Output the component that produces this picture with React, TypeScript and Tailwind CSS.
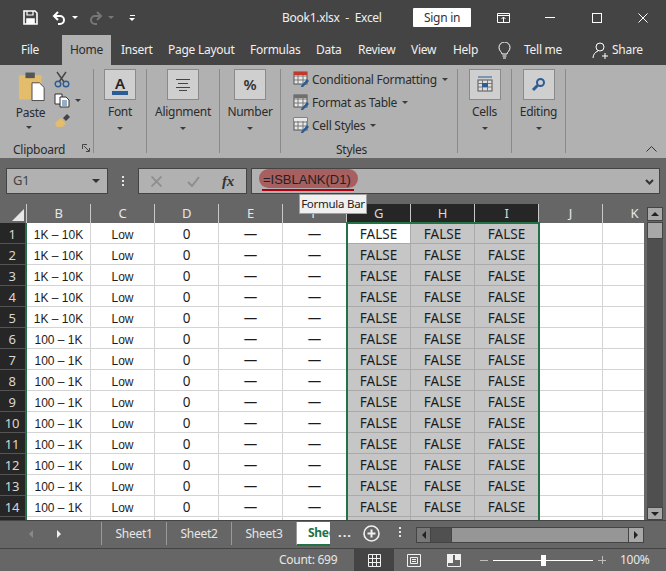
import { ReactNode } from "react";

const ROWS = Array.from({ length: 15 }, (_, i) => i + 1);
const COLS = ["B", "C", "D", "E", "F", "G", "H", "I", "J", "K"];

function Caret({ className = "" }: { className?: string }) {
  return <span className={`inline-block h-0 w-0 border-x-[3px] border-t-[3px] border-x-transparent border-t-[#3c3c3c] ${className}`} />;
}

function SaveIcon() {
  return (
    <svg width="15" height="15" viewBox="0 0 15 15" fill="none" stroke="#fff" strokeWidth="1.6">
      <path d="M1 1h11l2 2v11H1z" />
      <path d="M4 1v4h6V1" strokeWidth="1.2" />
      <path d="M4 14V9h7v5" fill="#fff" />
    </svg>
  );
}

function UndoIcon({ color, flip }: { color: string; flip?: boolean }) {
  return (
    <svg width="15" height="14" viewBox="0 0 15 14" fill="none" stroke={color} strokeWidth="2" className={flip ? "-scale-x-100" : ""}>
      <path d="M6 1L2 5l4 4" />
      <path d="M2 5h6a4 4 0 0 1 4 4 4 4 0 0 1-4 4H6" />
    </svg>
  );
}

function LargeButton({ label, children, width }: { label: string; children: ReactNode; width: string }) {
  return (
    <div className={`flex ${width} mt-1 h-[84px] shrink-0 flex-col items-center border-r border-[#8a8a8a]`}>
      <div className="flex h-[31px] w-[32px] items-center justify-center border border-[#8a8a8a] bg-[#cfcfcf]">{children}</div>
      <div className="mt-[3px] text-[12px] leading-[18px] text-[#2b2b2b]">{label}</div>
      <Caret className="mt-[6px]" />
    </div>
  );
}

function StyleRow({ icon, label }: { icon: ReactNode; label: string }) {
  return (
    <div className="flex h-[23px] shrink-0 items-center gap-[2px] text-[12px] text-[#2b2b2b]">
      {icon}
      <span>{label}</span>
      <Caret className="ml-[3px]" />
    </div>
  );
}

function GridIcon({ top }: { top: string }) {
  return (
    <svg width="17" height="17" viewBox="0 0 17 17" fill="none">
      <rect x="1" y="1" width="13" height="12" fill="#e8e8e8" stroke="#555" />
      <path d="M1 5h13M1 9h13M5 1v12M10 1v12" stroke="#777" />
      <rect x="1" y="1" width="13" height="3" fill={top} />
      <path d="M8 15l6-7 2 2-6 6H8z" fill="#2b5c94" />
    </svg>
  );
}

function Ribbon() {
  return (
    <div className="flex h-[93px] bg-[#b1b1b1]">
      <div className="relative mt-1 flex h-[84px] w-[94px] shrink-0 border-r border-[#8a8a8a]">
        <div className="flex w-[50px] flex-col items-center">
          <svg width="28" height="30" viewBox="0 0 30 31" className="ml-[14px] mt-[3px]">
            <rect x="1" y="3" width="24" height="26" rx="1" fill="#e3bd6c" />
            <rect x="8" y="0" width="10" height="6" fill="#555" />
            <path d="M15 11h8l5 5v14H15z" fill="#fff" stroke="#444" />
          </svg>
          <span className="ml-[11px] mt-[2px] text-[12px] leading-[18px] text-[#2b2b2b]">Paste</span>
          <Caret className="ml-[8px] mt-[4px]" />
        </div>
        <div className="ml-[4px] flex flex-col gap-[5px] pt-[2px]">
          <svg width="16" height="17" viewBox="0 0 16 17" fill="none" stroke="#2b5c94" strokeWidth="1.4">
            <path d="M3 1l7 10M12 1L5 11" stroke="#444" />
            <circle cx="4" cy="13" r="2.8" />
            <circle cx="12" cy="13" r="2.8" />
          </svg>
          <div className="flex items-center gap-[5px]">
            <svg width="16" height="15" viewBox="0 0 16 15" fill="#fff" stroke="#333">
              <path d="M1 1h7v10H1z" />
              <path d="M6 4h6l3 3v7H6z" />
              <path d="M8 8h5M8 10h5M8 12h5" stroke="#2b5c94" />
            </svg>
            <Caret />
          </div>
          <svg width="17" height="15" viewBox="0 0 17 15">
            <path d="M1 10l6-5 5 6-4 3H3z" fill="#e3bd6c" />
            <path d="M9 5l4-4 3 3-4 4z" fill="#444" />
          </svg>
        </div>
        <div className="absolute bottom-[-6px] left-[13px] text-[12px] leading-[18px] text-[#2b2b2b]">Clipboard</div>
        <svg width="9" height="9" viewBox="0 0 9 9" fill="none" stroke="#444" className="absolute bottom-[0px] right-[2px]">
          <path d="M.5 5V.5H5M2 2l5 5M4 7.500h3.500V4" />
        </svg>
      </div>
      <LargeButton label="Font" width="w-[53px]">
        <div className="flex flex-col items-center">
          <span className="text-[15px] font-semibold leading-[16px] text-[#222]">A</span>
          <span className="h-[4px] w-[16px] bg-[#2b5c94]" />
        </div>
      </LargeButton>
      <LargeButton label="Alignment" width="w-[73px]">
        <svg width="16" height="12" viewBox="0 0 16 12" stroke="#444">
          <path d="M1 .5h14M3 4.500h10M1 8.500h14M4 11.500h8" />
        </svg>
      </LargeButton>
      <LargeButton label="Number" width="w-[61px]">
        <span className="text-[15px] font-semibold text-[#333]">%</span>
      </LargeButton>
      <div className="mt-1 flex h-[84px] w-[177px] shrink-0 flex-col border-r border-[#8a8a8a] pl-[12px]">
        <div className="-mt-[1px]">
          <StyleRow icon={<GridIcon top="#c0392b" />} label="Conditional Formatting" />
          <StyleRow icon={<GridIcon top="#6f6f6f" />} label="Format as Table" />
          <StyleRow icon={<GridIcon top="#e8e8e8" />} label="Cell Styles" />
        </div>
        <div className="mt-[5px] pl-[43px] text-[12px] leading-[16px] text-[#2b2b2b]">Styles</div>
      </div>
      <LargeButton label="Cells" width="w-[54px]">
        <svg width="16" height="17" viewBox="0 0 16 17">
          <path d="M1 1h14" stroke="#2b5c94" />
          <rect x="1" y="4" width="14" height="11" fill="#ddd" stroke="#555" />
          <path d="M1 7.500h14M1 11h14M5.500 4v11M10.500 4v11" stroke="#777" />
          <rect x="5" y="7" width="6" height="4" fill="#2b5c94" />
        </svg>
      </LargeButton>
      <LargeButton label="Editing" width="w-[54px]">
        <svg width="15" height="15" viewBox="0 0 15 15" fill="none" stroke="#2b5c94" strokeWidth="2">
          <circle cx="9.500" cy="5.500" r="3.500" />
          <path d="M6.500 8.500L2 13" strokeWidth="3" />
        </svg>
      </LargeButton>
      <div className="relative flex-1">
        <svg width="11" height="6" viewBox="0 0 11 6" fill="none" stroke="#333" className="absolute bottom-[6px] right-[9px]">
          <path d="M.5 5.500l5-5 5 5" />
        </svg>
      </div>
    </div>
  );
}

function ColHeader({ col }: { col: string }) {
  const active = col === "G" || col === "H" || col === "I";
  return (
    <div className={`flex h-[19px] items-center justify-center border-r border-[#c8c8c8] text-[13px] ${active ? "bg-[#262626] text-[#d8d8d8]" : "text-[#e6e6e6]"}`}>
      {col}
    </div>
  );
}

function Cell({ col, row }: { col: string; row: number }) {
  // row 15 only shows as a sliver above the sheet tabs, so it carries no text
  let text = "";
  const selected = col === "G" || col === "H" || col === "I";
  if (row < 15) {
    if (col === "B") text = row <= 5 ? "1K – 10K" : "100 – 1K";
    if (col === "C") text = "Low";
    if (col === "D") text = "0";
    if (col === "E" || col === "F") text = "—";
    if (selected) text = "FALSE";
  }
  const white = col === "G" && row === 1;
  const liberation = col === "B" || col === "C";
  return (
    <div
      className={`flex h-[21px] items-center justify-center border-b border-r pt-[3px] tracking-normal ${
        white ? "border-[#aaaaaa] bg-white" : selected ? "border-[#aaaaaa] bg-[#c6c6c6]" : "border-[#d4d4d4] bg-white"
      } ${liberation ? "font-['Liberation_Sans'] text-[12px]" : "text-[13.5px]"} text-[#1c1c1c]`}
    >
      {text}
    </div>
  );
}

function Sheet() {
  return (
    <div className="flex h-[316px] overflow-hidden">
      <div className="relative grid h-[316px] w-[644px] grid-cols-[27px_repeat(10,64px)] content-start overflow-hidden">
        <div className="flex h-[19px] items-end justify-end border-r border-[#c8c8c8] pb-[2px] pr-[2px]">
          <span className="h-0 w-0 border-b-[12px] border-l-[12px] border-b-[#e8e8e8] border-l-transparent" />
        </div>
        {COLS.map((c) => <ColHeader key={c} col={c} />)}
        {ROWS.map((r) => [
          <div key={`h${r}`} className="flex h-[21px] items-center justify-center border-b border-r-2 border-b-[#555] border-r-[#217346] bg-[#262626] pr-[1px] pt-[3px] text-[13px] text-[#d8d8d8]">
            {r < 15 ? r : ""}
          </div>,
          ...COLS.map((c) => <Cell key={c + r} col={c} row={r} />),
        ])}
        <div className="pointer-events-none absolute left-[346px] top-[18px] h-[300px] w-[194px] border-2 border-[#217346]" />
      </div>
      <div className="flex w-[22px] flex-col items-center pt-[3px]">
        <div className="flex h-[14px] w-[16px] items-center justify-center border border-[#444] bg-[#a8a8a8]">
          <span className="h-0 w-0 border-x-[4px] border-b-[4px] border-x-transparent border-b-[#222]" />
        </div>
        <div className="mt-[1px] h-[17px] w-[16px] border border-[#444] bg-[#a8a8a8]" />
        <div className="w-[16px] flex-1 bg-[#4f4f4f]" />
        <div className="flex h-[13px] w-[16px] items-center justify-center border border-[#444] bg-[#a8a8a8]">
          <span className="h-0 w-0 border-x-[4px] border-t-[4px] border-x-transparent border-t-[#222]" />
        </div>
      </div>
    </div>
  );
}

function SheetTab({ label }: { label: string }) {
  return <div className="flex h-[23px] w-[65px] items-center justify-center border-r border-[#9a9a9a] text-[12px] text-[#e6e6e6]">{label}</div>;
}

export default function App() {
  return (
    <div className="flex h-[571px] w-[666px] flex-col overflow-hidden bg-[#666666] font-['Noto_Sans',sans-serif] tracking-[-0.27px]">
      {/* title bar */}
      <div className="flex h-[35px] items-center bg-[#444444] text-[12px] text-[#f0f0f0]">
        <div className="ml-[23px]"><SaveIcon /></div>
        <div className="ml-[14px]"><UndoIcon color="#fff" /></div>
        <span className="ml-[5px] h-0 w-0 border-x-[3px] border-t-[3px] border-x-transparent border-t-[#fff]" />
        <div className="ml-[10px]"><UndoIcon color="#777" flip /></div>
        <span className="ml-[5px] h-0 w-0 border-x-[3px] border-t-[3px] border-x-transparent border-t-[#777]" />
        <div className="ml-[15px] flex flex-col items-center gap-[2px]">
          <span className="h-px w-[5px] bg-white" />
          <span className="h-0 w-0 border-x-[3px] border-t-[3px] border-x-transparent border-t-white" />
        </div>
        <span className="ml-[147px] w-[106px] whitespace-pre">Book1.xlsx  -  Excel</span>
        <div className="ml-[25px] flex h-[19px] w-[58px] items-center justify-center rounded-[1px] bg-white text-[#333]">Sign in</div>
        <svg width="13" height="10" viewBox="0 0 13 10" fill="none" stroke="#fff" className="ml-[26px]">
          <path d="M.5.500h12v9H.5zM.5 2.500h12M6.500 9V4M4.500 6l2-2 2 2" />
        </svg>
        <span className="ml-[35px] h-px w-[10px] bg-white" />
        <span className="ml-[37px] h-[10px] w-[10px] border border-white" />
        <svg width="10" height="10" viewBox="0 0 10 10" stroke="#fff" className="ml-[36px]">
          <path d="M.5.500l9 9M9.500.500l-9 9" />
        </svg>
      </div>

      {/* ribbon tabs */}
      <div className="flex h-[30px] items-center whitespace-nowrap bg-[#444444] text-[12px] text-[#f0f0f0]">
        <span className="ml-[21px] w-[18px]">File</span>
        <div className="ml-[23px] flex h-[30px] w-[49px] items-center justify-center bg-[#b1b1b1] text-[#2b2b2b]">Home</div>
        <span className="ml-[10px] w-[29px]">Insert</span>
        <span className="ml-[18px] w-[65px]">Page Layout</span>
        <span className="ml-[17px] w-[49px]">Formulas</span>
        <span className="ml-[17px] w-[25px]">Data</span>
        <span className="ml-[17px] w-[36px]">Review</span>
        <span className="ml-[17px] w-[25px]">View</span>
        <span className="ml-[17px] w-[25px]">Help</span>
        <svg width="13" height="17" viewBox="0 0 13 17" fill="none" stroke="#fff" className="ml-[20px]">
          <path d="M4 12c0-2-3-3-3-6.500a5.500 5.500 0 0 1 11 0C12 9 9 10 9 12zM4.500 14h4M5 16h3" />
        </svg>
        <span className="ml-[13px] w-[38px]">Tell me</span>
        <svg width="17" height="17" viewBox="0 0 17 17" fill="none" stroke="#fff" className="ml-[30px]">
          <circle cx="8" cy="5" r="4" />
          <path d="M1 16c0-3 2-6 5-7M10 14h6M13 11v6" />
        </svg>
        <span className="ml-[3px]">Share</span>
      </div>

      <Ribbon />

      {/* formula bar */}
      <div className="relative mt-[10px] flex h-[26px] items-stretch text-[12px] text-[#333]">
        <div className="ml-[6px] flex w-[102px] items-center justify-between border border-[#444] bg-[#b1b1b1] px-[6px] text-[13px] text-[#444]">
          G1
          <span className="mr-[1px] h-0 w-0 border-x-[4px] border-t-[4px] border-x-transparent border-t-[#333]" />
        </div>
        <div className="flex w-[30px] flex-col items-center justify-center gap-[2px]">
          <span className="h-[2px] w-[2px] bg-[#e6e6e6]" />
          <span className="h-[2px] w-[2px] bg-[#e6e6e6]" />
          <span className="h-[2px] w-[2px] bg-[#e6e6e6]" />
        </div>
        <div className="flex w-[109px] items-center border border-[#444] bg-[#b1b1b1]">
          <svg width="11" height="11" viewBox="0 0 11 11" stroke="#8e8e8e" strokeWidth="1.800" className="ml-[12px]">
            <path d="M.5.500l10 10M10.500.500l-10 10" />
          </svg>
          <svg width="13" height="11" viewBox="0 0 13 11" fill="none" stroke="#8e8e8e" strokeWidth="2" className="ml-[25px]">
            <path d="M1 6l4 4 7-9" />
          </svg>
          <span className="ml-[22px] font-['Liberation_Serif',serif] text-[15px] font-bold italic leading-none text-[#333]">fx</span>
        </div>
        <div className="relative ml-[4px] flex w-[409px] items-center border border-[#444] bg-[#b1b1b1] pb-[1px] pl-[10px] text-[13px] tracking-normal text-[#222]">
          <span className="relative border-b-2 border-[#b00010] pl-[1px] pr-[3px]">
            <span className="absolute -left-[3px] -right-[4px] -top-[1px] bottom-[1px] rounded-full bg-[#a85f5f]" />
            <span className="relative font-['Liberation_Sans',sans-serif]">=ISBLANK(D1)</span>
          </span>
          <svg width="9" height="6" viewBox="0 0 9 6" fill="none" stroke="#333" strokeWidth="2" className="absolute right-[5px] top-[10px]">
            <path d="M1 1l3.500 3.500L8 1" />
          </svg>
        </div>
        <div className="absolute left-[299px] top-[26px] z-10 flex h-[20px] w-[68px] items-center justify-center whitespace-nowrap border border-[#a0a0a0] bg-[#f0f0f0] text-[11.5px] text-[#222]">Formula Bar</div>
      </div>

      <div className="mt-[10px]"><Sheet /></div>

      {/* sheet tabs */}
      <div className="flex h-[28px] items-start border-t border-[#444] pt-[1px]">
        <div className="flex h-[23px] w-[102px] items-center border-r border-[#9a9a9a]">
          <span className="ml-[29px] h-0 w-0 border-y-[4px] border-r-[4px] border-y-transparent border-r-[#8a8a8a]" />
          <span className="ml-[24px] h-0 w-0 border-y-[4px] border-l-[4px] border-y-transparent border-l-[#f0f0f0]" />
        </div>
        <SheetTab label="Sheet1" />
        <SheetTab label="Sheet2" />
        <SheetTab label="Sheet3" />
        <div className="h-[24px] w-[33px] overflow-hidden border-b-2 border-[#217346] bg-white pl-[11px] text-[12px] font-bold leading-[22px] text-[#217346]">Sheet4</div>
        <span className="ml-[8px] mt-[4px] w-[12px] text-[13px] font-bold leading-none tracking-[1px] text-[#f0f0f0]">...</span>
        <svg width="17" height="17" viewBox="0 0 17 17" fill="none" stroke="#f0f0f0" strokeWidth="1.600" className="ml-[13px] mt-[3px]">
          <circle cx="8.500" cy="8.500" r="7.500" />
          <path d="M8.500 4.500v8M4.500 8.500h8" strokeWidth="2" />
        </svg>
        <div className="ml-[19px] mt-[5px] flex flex-col gap-[2px]">
          <span className="h-[2px] w-[2px] bg-[#e6e6e6]" />
          <span className="h-[2px] w-[2px] bg-[#e6e6e6]" />
          <span className="h-[2px] w-[2px] bg-[#e6e6e6]" />
        </div>
        <div className="ml-[15px] mt-[5px] flex h-[16px] w-[228px] items-stretch border border-[#444] bg-[#505050]">
          <div className="flex w-[14px] items-center justify-center border-r border-[#444] bg-[#787878]">
            <span className="h-0 w-0 border-y-[4px] border-r-[4px] border-y-transparent border-r-[#222]" />
          </div>
          <div className="ml-[20px] flex-1 border-x border-[#444] bg-[#969696]" />
          <div className="flex w-[14px] items-center justify-center bg-[#a8a8a8]">
            <span className="h-0 w-0 border-y-[4px] border-l-[4px] border-y-transparent border-l-[#222]" />
          </div>
        </div>
      </div>

      {/* status bar */}
      <div className="flex h-[23px] items-center border-t border-[#444] text-[12px] text-[#e6e6e6]">
        <span className="ml-[279px] w-[75px] whitespace-nowrap">Count: 699</span>
        <div className="flex h-[22px] w-[40px] items-center justify-center bg-[#444444]">
          <svg width="13" height="13" viewBox="0 0 13 13" fill="none" stroke="#f0f0f0">
            <path d="M.5.500h12v12H.5zM.5 4.500h12M.5 8.500h12M4.500.500v12M8.500.500v12" />
          </svg>
        </div>
        <svg width="14" height="13" viewBox="0 0 14 13" fill="none" stroke="#f0f0f0" className="ml-[13px]">
          <path d="M.5.500h13v12H.5zM3.500 3.500h7v6h-7zM5 5.500h4M5 7.500h4" />
        </svg>
        <svg width="14" height="13" viewBox="0 0 14 13" fill="#f0f0f0" className="ml-[26px]">
          <path d="M0 0h6v9H0zM8 0h6v6H8z" />
          <path d="M.5.500h13v12H.5z" fill="none" stroke="#f0f0f0" />
        </svg>
        <span className="ml-[19px] h-px w-[8px] bg-[#bdbdbd]" />
        <div className="relative ml-[5px] flex h-[11px] w-[100px] items-center">
          <span className="h-px w-full bg-white" />
          <span className="absolute left-[48px] h-[11px] w-[5px] bg-white" />
        </div>
        <span className="relative ml-[5px] h-px w-[8px] bg-[#bdbdbd]">
          <span className="absolute left-[3.500px] top-[-3.500px] h-[8px] w-px bg-[#bdbdbd]" />
        </span>
        <span className="ml-[14px]">100%</span>
      </div>
    </div>
  );
}
